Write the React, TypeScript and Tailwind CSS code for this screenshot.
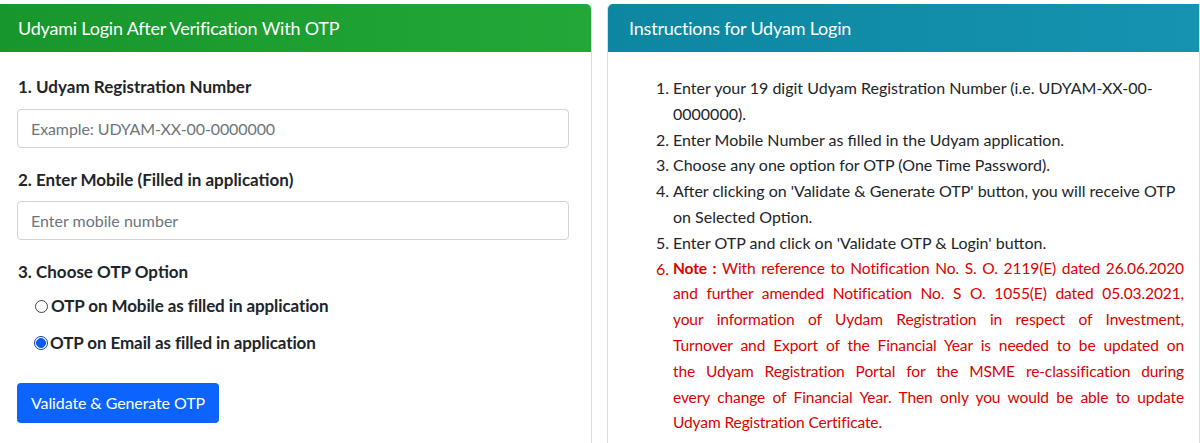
import React from "react";

const font = { fontFamily: "Lato, 'Noto Sans', sans-serif" };

function Radio({ checked }: { checked?: boolean }) {
  if (checked) {
    return (
      <span className="inline-flex items-center justify-center w-[14px] h-[14px] rounded-full border border-[#0a3fb0] bg-white shrink-0">
        <span className="w-[10px] h-[10px] rounded-full bg-[#0b5cff] border border-[#0a52e0]" />
      </span>
    );
  }
  return <span className="inline-block w-[13px] h-[13px] rounded-full border border-[#444] bg-white shrink-0" />;
}

const redLines: React.ReactNode[] = [
  <>
    <b>Note :</b> With reference to Notification No. S. O. 2119(E) dated 26.06.2020
  </>,
  "and further amended Notification No. S O. 1055(E) dated 05.03.2021,",
  "your information of Uydam Registration in respect of Investment,",
  "Turnover and Export of the Financial Year is needed to be updated on",
  "the Udyam Registration Portal for the MSME re-classification during",
  "every change of Financial Year. Then only you would be able to update",
];

export default function App() {
  const items: { n: string; text: React.ReactNode }[] = [
    { n: "1.", text: "Enter your 19 digit Udyam Registration Number (i.e. UDYAM-XX-00-0000000)." },
    { n: "2.", text: "Enter Mobile Number as filled in the Udyam application." },
    { n: "3.", text: "Choose any one option for OTP (One Time Password)." },
    { n: "4.", text: "After clicking on 'Validate & Generate OTP' button, you will receive OTP on Selected Option." },
    { n: "5.", text: "Enter OTP and click on 'Validate OTP & Login' button." },
  ];
  return (
    <div className="w-[1200px] h-[443px] overflow-hidden bg-white flex pt-[4px] text-[#212529]" style={font}>
      <div className="w-[592px] shrink-0 border-r border-[#dcdcdc] rounded-tr-[5px] flex flex-col">
        <div className="h-[48px] flex items-center pl-[18px] text-white text-[18px] tracking-[-0.2px] bg-gradient-to-r from-[#17962c] to-[#22a838] rounded-tr-[5px]">
          Udyami Login After Verification With OTP
        </div>
        <div className="pt-[23px] pl-[17px] pr-[22px] flex flex-col">
          <div className="font-bold text-[17px] leading-[24px] pl-[1px]">1. Udyam Registration Number</div>
          <div className="mt-[10px] h-[39px] border border-[#ced4da] rounded-[4px] flex items-center pl-[13px] text-[16px] tracking-[-0.1px] text-[#6c757d]">
            Example: UDYAM-XX-00-0000000
          </div>
          <div className="mt-[20px] font-bold text-[17px] leading-[24px] pl-[1px]">2. Enter Mobile (Filled in application)</div>
          <div className="mt-[9px] h-[39px] border border-[#ced4da] rounded-[4px] flex items-center pl-[13px] text-[16px] text-[#6c757d]">
            Enter mobile number
          </div>
          <div className="mt-[20px] font-bold text-[17px] leading-[24px] pl-[1px]">3. Choose OTP Option</div>
          <div className="mt-[10px] flex items-center gap-[3px] pl-[18px] font-bold text-[17px] leading-[24px] tracking-[-0.1px]">
            <Radio />
            <span>OTP on Mobile as filled in application</span>
          </div>
          <div className="mt-[13px] flex items-center gap-[2px] pl-[17px] font-bold text-[17px] leading-[24px] tracking-[-0.1px]">
            <Radio checked />
            <span>OTP on Email as filled in application</span>
          </div>
          <div className="mt-[28px] flex">
            <div className="flex items-center h-[40px] px-[14px] rounded-[4px] bg-[#0d63fd] text-white text-[16px] tracking-[-0.1px] whitespace-nowrap">
              Validate &amp; Generate OTP
            </div>
          </div>
        </div>
      </div>
      <div className="w-[15px] shrink-0" />
      <div className="flex-1 border-l border-r border-[#dcdcdc] rounded-tl-[5px] flex flex-col">
        <div className="h-[48px] flex items-center pl-[21px] text-white text-[18px] tracking-[-0.2px] bg-gradient-to-r from-[#0d87a1] to-[#1593b0] rounded-tl-[5px]">
          Instructions for Udyam Login
        </div>
        <div className="pt-[23px] pl-[48px] pr-[15px] text-[16px] leading-[25.8px]">
          {items.map((it) => (
            <div key={it.n} className="flex">
              <span className="w-[17px] shrink-0">{it.n}</span>
              <span>{it.text}</span>
            </div>
          ))}
          <div className="flex text-[#dc0000]">
            <span className="w-[17px] shrink-0">6.</span>
            <div className="flex-1 min-w-0 text-[15.5px] tracking-[-0.1px]">
              {redLines.map((l, i) => (
                <div key={i} className="whitespace-nowrap text-justify [text-align-last:justify]">
                  {l}
                </div>
              ))}
              <div className="whitespace-nowrap">Udyam Registration Certificate.</div>
            </div>
          </div>
        </div>
      </div>
    </div>
  );
}
